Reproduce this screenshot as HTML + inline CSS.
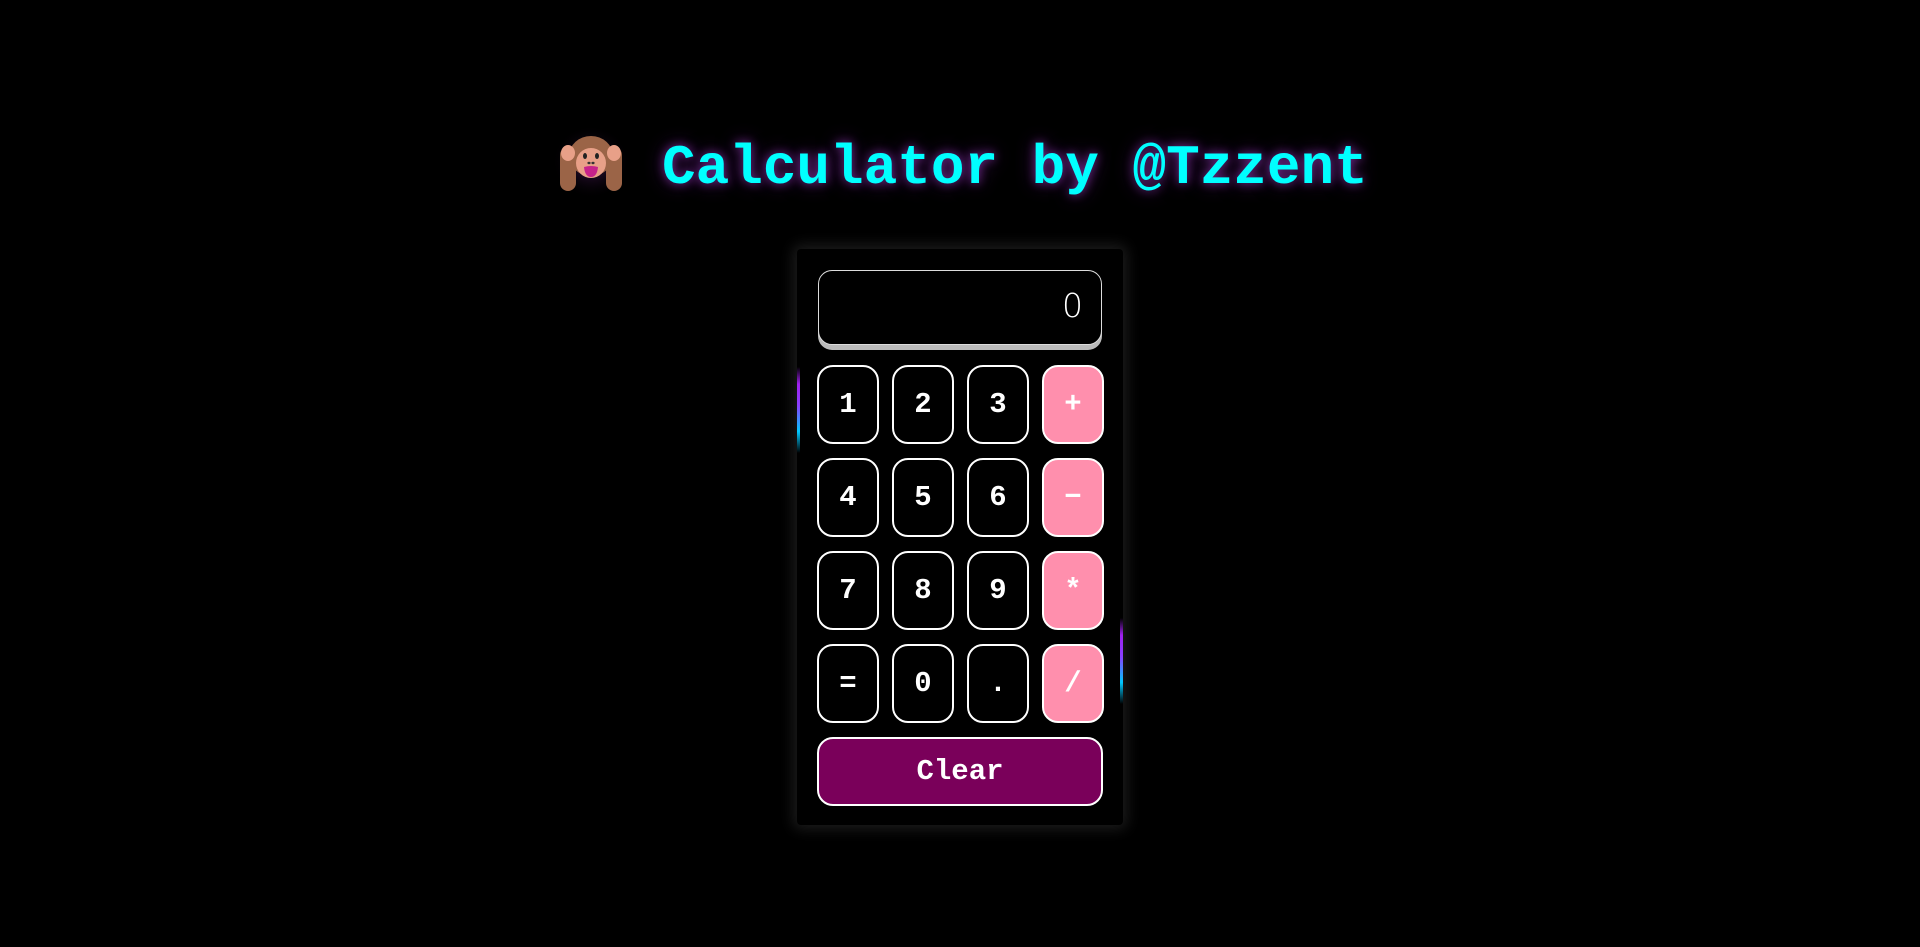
<!DOCTYPE html>
<html><head><meta charset="utf-8"><style>
html,body{margin:0;padding:0;background:#000;width:1920px;height:947px;overflow:hidden;}
.title{position:absolute;left:662px;top:135px;font-family:"Liberation Mono",monospace;font-weight:bold;font-size:56px;line-height:66px;color:#0ff;text-shadow:0 0 10px rgba(160,60,200,.7),0 0 20px rgba(120,40,160,.5);white-space:nowrap;}
.emoji{position:absolute;left:552px;top:125px;width:78px;height:74px;}
.panel{position:absolute;left:797px;top:249px;width:326px;height:576px;background:#000;border-radius:4px;box-shadow:0 0 14px 4px rgba(40,40,40,.7);}
.disp{position:absolute;left:818px;top:270px;width:284px;height:75px;border:1.5px solid #ddd;border-radius:14px;box-shadow:0 5px 0 #bbb;box-sizing:border-box;background:#000;color:#fff;font-family:"DejaVu Sans","Liberation Sans",sans-serif;font-weight:200;font-size:33px;text-align:right;padding-right:18px;line-height:70px;}
.b{position:absolute;width:62px;height:79px;border:2px solid #fff;border-radius:16px;box-sizing:border-box;background:#000;color:#fff;font-family:"Liberation Mono",monospace;font-weight:bold;font-size:29px;display:flex;align-items:center;justify-content:center;}
.op{background:#ff8fad;}
.clear{position:absolute;left:817px;top:737px;width:286px;height:69px;border:2px solid #fff;border-radius:16px;box-sizing:border-box;background:#7a005a;color:#fff;font-family:"Liberation Mono",monospace;font-weight:bold;font-size:29px;display:flex;align-items:center;justify-content:center;}
.bar{position:absolute;width:3px;height:86px;background:linear-gradient(#000,#a020f0 20%,#8a40ff 45%,#00c8ff 75%,#000);}
</style></head><body>
<svg class="emoji" viewBox="0 0 78 74">
<defs><radialGradient id="g"><stop offset="0" stop-color="#7a2a90" stop-opacity=".6"/><stop offset="1" stop-color="#000" stop-opacity="0"/></radialGradient></defs>
<ellipse cx="39" cy="37" rx="39" ry="37" fill="url(#g)"/>
<ellipse cx="39" cy="31" rx="22" ry="20" fill="#9b6447"/>
<ellipse cx="39" cy="38" rx="15" ry="15" fill="#e8a088"/>
<ellipse cx="33" cy="31" rx="2" ry="3" fill="#222"/><ellipse cx="45" cy="31" rx="2" ry="3" fill="#222"/>
<ellipse cx="37" cy="38" rx="1.6" ry="1.2" fill="#333"/><ellipse cx="41" cy="38" rx="1.6" ry="1.2" fill="#333"/>
<path d="M32 42 Q39 40 46 42 Q45 52 39 52 Q33 52 32 42Z" fill="#c7228a"/>
<rect x="8" y="22" width="16" height="44" rx="8" fill="#9b6447"/>
<rect x="54" y="22" width="16" height="44" rx="8" fill="#9b6447"/>
<ellipse cx="16" cy="28" rx="7" ry="8" fill="#e8a088"/><ellipse cx="62" cy="28" rx="7" ry="8" fill="#e8a088"/>
</svg>
<div class="title">Calculator by @Tzzent</div>
<div class="panel"></div>
<div class="bar" style="left:797px;top:367px"></div>
<div class="bar" style="left:1120px;top:618px"></div>
<div class="disp">0</div>
<div class="b" style="left:817px;top:365px">1</div>
<div class="b" style="left:892px;top:365px">2</div>
<div class="b" style="left:967px;top:365px">3</div>
<div class="b op" style="left:1042px;top:365px">+</div>
<div class="b" style="left:817px;top:458px">4</div>
<div class="b" style="left:892px;top:458px">5</div>
<div class="b" style="left:967px;top:458px">6</div>
<div class="b op" style="left:1042px;top:458px">−</div>
<div class="b" style="left:817px;top:551px">7</div>
<div class="b" style="left:892px;top:551px">8</div>
<div class="b" style="left:967px;top:551px">9</div>
<div class="b op" style="left:1042px;top:551px">*</div>
<div class="b" style="left:817px;top:644px">=</div>
<div class="b" style="left:892px;top:644px">0</div>
<div class="b" style="left:967px;top:644px">.</div>
<div class="b op" style="left:1042px;top:644px">/</div>
<div class="clear">Clear</div>
</body></html>
